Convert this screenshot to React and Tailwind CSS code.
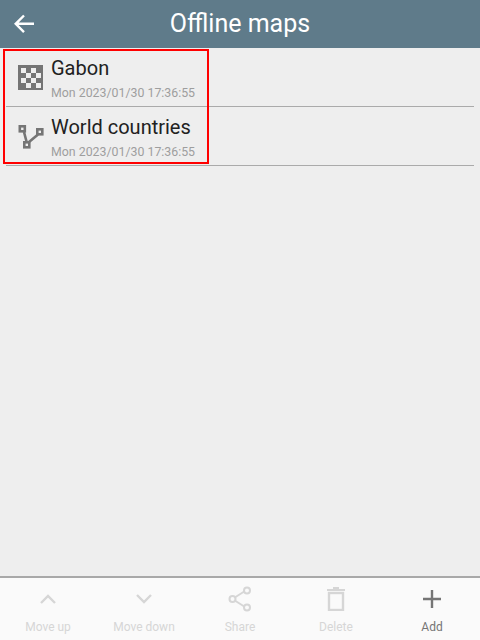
import { useState } from "react";

const maps = [
  { name: "Gabon", date: "Mon 2023/01/30 17:36:55", type: "raster" },
  { name: "World countries", date: "Mon 2023/01/30 17:36:55", type: "vector" },
];

function RasterIcon() {
  const cells = [];
  for (let y = 0; y < 4; y++) {
    for (let x = 0; x < 4; x++) {
      if ((x + y) % 2 === 0) {
        cells.push(<rect key={x + "-" + y} x={3 + x * 5} y={3 + y * 5} width="5" height="5" fill="#eeeeee" />);
      }
    }
  }
  return (
    <svg width="25" height="25" viewBox="0 0 25 25" shapeRendering="crispEdges">
      <rect x="0" y="0" width="25" height="25" fill="#757575" />
      {cells}
    </svg>
  );
}

function VectorIcon() {
  return (
    <svg width="26" height="26" viewBox="0 0 26 26" fill="none" stroke="#757575" strokeWidth="2.6">
      <path d="M6 8 L8.5 17.5 M11 18 L20 10.5" />
      <rect x="1.8" y="2.3" width="5" height="5" />
      <rect x="19.3" y="5.3" width="5" height="5" />
      <rect x="6.3" y="18.3" width="5" height="5" />
    </svg>
  );
}

function ToolButton({ label, active, children }) {
  return (
    <div className={"flex flex-1 flex-col items-center " + (active ? "text-[#757575]" : "text-[#d6d6d6]")}>
      <div className="flex h-[30px] w-[30px] items-center justify-center">{children}</div>
      <span className="mt-[6px] text-[12px] leading-[14px]">{label}</span>
    </div>
  );
}

export default function App() {
  const [items] = useState(maps);

  return (
    <div className="relative flex h-[640px] w-[480px] flex-col bg-[#eeeeee] font-['Roboto',sans-serif]">
      <div className="flex h-[48px] items-center bg-[#5f7b8a] text-white">
        <svg className="ml-[13px]" width="22" height="22" viewBox="0 0 22 22" fill="none" stroke="white" strokeWidth="2.4">
          <path d="M21 10.8 H3 M11 2.5 L2.7 10.8 L11 19.1" />
        </svg>
        <div className="flex-1 pr-[35px] text-center text-[25px] leading-[48px]">Offline maps</div>
      </div>

      <div className="flex-1 px-[6px]">
        {items.map((m) => (
          <div key={m.name} className="flex h-[59px] border-b border-[#aaaaaa] pl-[12px]">
            <div className="mt-[17px] mr-[8px] w-[25px]">{m.type === "raster" ? <RasterIcon /> : <VectorIcon />}</div>
            <div>
              <div className="mt-[8px] text-[20px] leading-[24px] text-[#212121]">{m.name}</div>
              <div className="mt-[6px] text-[12.35px] leading-[14px] text-[#9e9e9e]">{m.date}</div>
            </div>
          </div>
        ))}
      </div>

      <div className="absolute top-[49px] left-[3px] h-[115px] w-[206px] border-2 border-[#ff0000]" />

      <div className="flex h-[64px] border-t-2 border-[#a8a8a8] bg-[#fafafa] pt-[6px]">
        <ToolButton label="Move up">
          <svg width="18" height="10" viewBox="0 0 18 10" fill="none" stroke="currentColor" strokeWidth="2.4">
            <path d="M2 9 L9 2 L16 9" />
          </svg>
        </ToolButton>
        <ToolButton label="Move down">
          <svg width="18" height="10" viewBox="0 0 18 10" fill="none" stroke="currentColor" strokeWidth="2.4">
            <path d="M2 1 L9 8 L16 1" />
          </svg>
        </ToolButton>
        <ToolButton label="Share">
          <svg width="24" height="26" viewBox="0 0 24 26" fill="none" stroke="currentColor" strokeWidth="2">
            <path d="M6 12 L17 5 M6 14 L17 21" />
            <circle cx="4.5" cy="13" r="3" fill="#fafafa" />
            <circle cx="19" cy="4.5" r="3" fill="#fafafa" />
            <circle cx="19" cy="21.5" r="3" fill="#fafafa" />
          </svg>
        </ToolButton>
        <ToolButton label="Delete">
          <svg width="18" height="24" viewBox="0 0 18 24" fill="none" stroke="currentColor" strokeWidth="2">
            <path d="M0 3 H18 M6 1 H12" />
            <rect x="2" y="6" width="14" height="17" strokeWidth="2.4" />
          </svg>
        </ToolButton>
        <ToolButton label="Add" active>
          <svg width="20" height="20" viewBox="0 0 20 20" fill="none" stroke="currentColor" strokeWidth="2.4">
            <path d="M10 1 V19 M1 10 H19" />
          </svg>
        </ToolButton>
      </div>
    </div>
  );
}
